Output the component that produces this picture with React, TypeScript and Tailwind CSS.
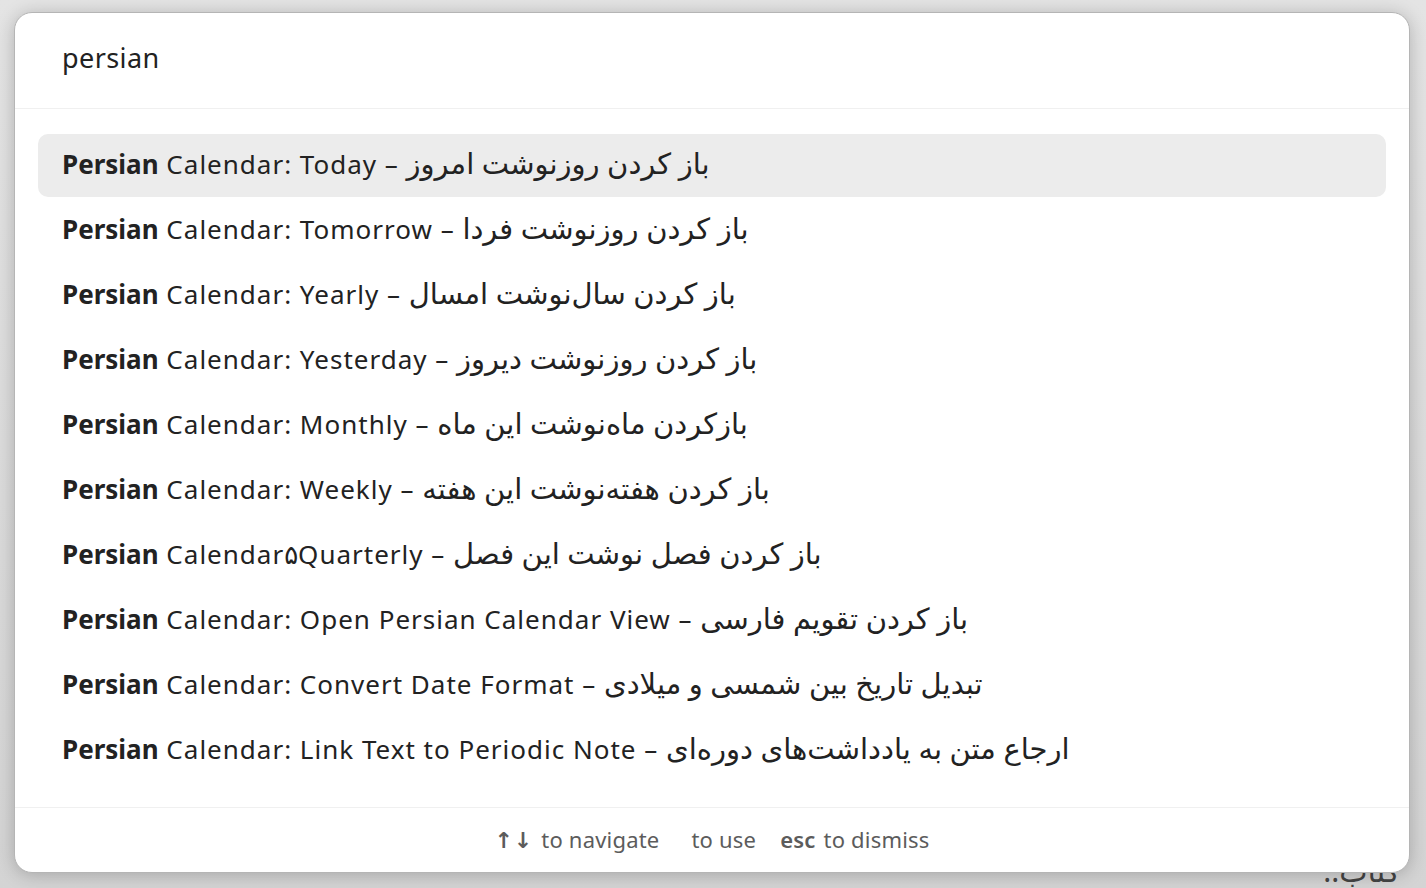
const FONT = '"Noto Sans", "DejaVu Sans", sans-serif';

const commands = [
  ["Calendar: Today – ", "باز کردن روزنوشت امروز"],
  ["Calendar: Tomorrow – ", "باز کردن روزنوشت فردا"],
  ["Calendar: Yearly – ", "باز کردن سال‌نوشت امسال"],
  ["Calendar: Yesterday – ", "باز کردن روزنوشت دیروز"],
  ["Calendar: Monthly – ", "بازکردن ماه‌نوشت این ماه"],
  ["Calendar: Weekly – ", "باز کردن هفته‌نوشت این هفته"],
  ["Calendar۵Quarterly – ", "باز کردن فصل نوشت این فصل"],
  ["Calendar: Open Persian Calendar View – ", "باز کردن تقویم فارسی"],
  ["Calendar: Convert Date Format – ", "تبدیل تاریخ بین شمسی و میلادی"],
  ["Calendar: Link Text to Periodic Note – ", "ارجاع متن به یادداشت‌های دوره‌ای"],
];

export default function App() {
  return (
    <div
      className="relative h-[888px] w-[1426px] overflow-hidden bg-[linear-gradient(180deg,#e4e4e4,#d4d4d4)]"
      style={{ fontFamily: FONT }}
    >
      {/* note text behind the palette */}
      <div
        dir="rtl"
        className="absolute right-[26px] top-[856px] text-[30px] leading-none text-[#444]"
      >
        کتاب::
      </div>

      <div className="relative ml-[14px] mt-[12px] flex h-[861px] w-[1396px] flex-col rounded-[18px] border border-[#b5b5b5] bg-white shadow-[0_2px_18px_rgba(0,0,0,0.22)]">
        <div className="flex h-[96px] shrink-0 items-center border-b border-[#f0f0f0] px-[47px] pb-[5px] text-[27px] tracking-[0.4px] text-[#222]">
          persian
        </div>

        <div className="flex flex-1 flex-col gap-[2px] px-[23px] pt-[25px]">
          {commands.map(([en, fa], i) => (
            <div
              key={i}
              className={`flex h-[63px] shrink-0 items-center rounded-[10px] px-[24px] pb-[5px] text-[26px] text-[#222] ${
                i === 0 ? "bg-[#ececec]" : ""
              }`}
            >
              <span className="whitespace-pre">
                <span className="font-bold">Persian</span>
                <span className="tracking-[1px]"> {en}</span>
                <span className="text-[29px]">{fa}</span>
              </span>
            </div>
          ))}
        </div>

        <div className="flex h-[65px] shrink-0 items-center justify-center border-t border-[#f0f0f0] pb-[2px] text-[22px] tracking-[0.2px] text-[#5c5c5c]">
          <span className="flex items-center gap-[8px]">
            <span className="font-semibold tracking-[1px]">↑↓</span>
            <span>to navigate</span>
          </span>
          <span className="ml-[32px]">to use</span>
          <span className="ml-[24px] flex items-center gap-[8px]">
            <span className="font-semibold">esc</span>
            <span>to dismiss</span>
          </span>
        </div>
      </div>
    </div>
  );
}
